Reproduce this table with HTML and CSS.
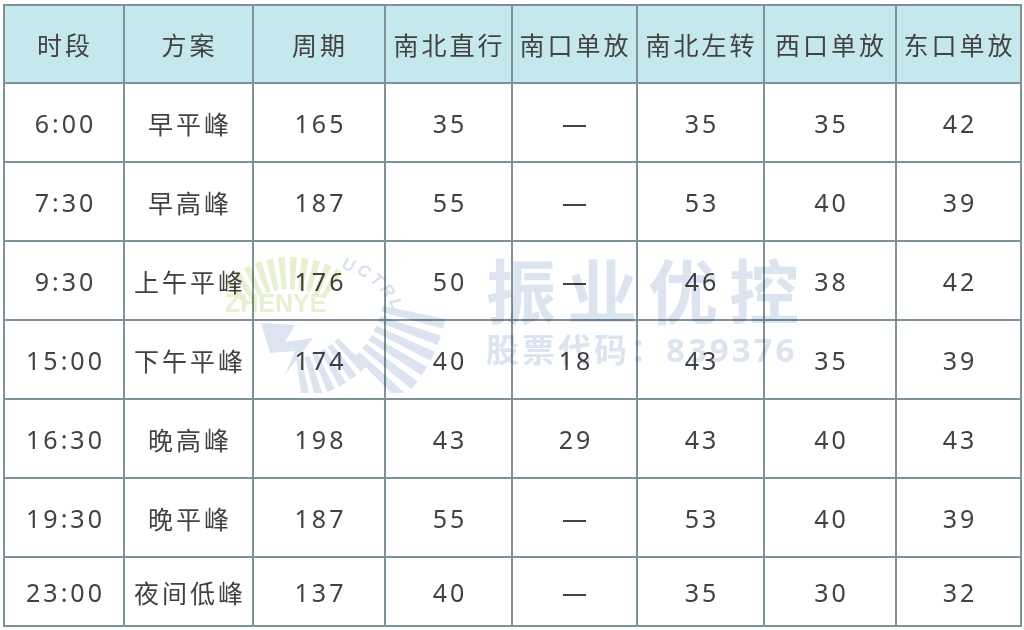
FILE: index.html
```html
<!DOCTYPE html>
<html lang="zh-CN">
<head>
<meta charset="utf-8">
<title>配时方案</title>
<link rel="stylesheet" href="styles.css">
</head>
<body>
<div class="page">
  <div class="table">
    <div class="cell head">时段</div>
    <div class="cell head">方案</div>
    <div class="cell head">周期</div>
    <div class="cell head">南北直行</div>
    <div class="cell head">南口单放</div>
    <div class="cell head">南北左转</div>
    <div class="cell head">西口单放</div>
    <div class="cell head">东口单放</div>

    <div class="cell">6:00</div><div class="cell">早平峰</div><div class="cell">165</div><div class="cell">35</div><div class="cell">—</div><div class="cell">35</div><div class="cell">35</div><div class="cell">42</div>
    <div class="cell">7:30</div><div class="cell">早高峰</div><div class="cell">187</div><div class="cell">55</div><div class="cell">—</div><div class="cell">53</div><div class="cell">40</div><div class="cell">39</div>
    <div class="cell">9:30</div><div class="cell">上午平峰</div><div class="cell">176</div><div class="cell">50</div><div class="cell">—</div><div class="cell">46</div><div class="cell">38</div><div class="cell">42</div>
    <div class="cell">15:00</div><div class="cell">下午平峰</div><div class="cell">174</div><div class="cell">40</div><div class="cell">18</div><div class="cell">43</div><div class="cell">35</div><div class="cell">39</div>
    <div class="cell">16:30</div><div class="cell">晚高峰</div><div class="cell">198</div><div class="cell">43</div><div class="cell">29</div><div class="cell">43</div><div class="cell">40</div><div class="cell">43</div>
    <div class="cell">19:30</div><div class="cell">晚平峰</div><div class="cell">187</div><div class="cell">55</div><div class="cell">—</div><div class="cell">53</div><div class="cell">40</div><div class="cell">39</div>
    <div class="cell">23:00</div><div class="cell">夜间低峰</div><div class="cell">137</div><div class="cell">40</div><div class="cell">—</div><div class="cell">35</div><div class="cell">30</div><div class="cell">32</div>
  </div>

  <svg class="wm-logo" width="240" height="148" viewBox="0 0 240 148" aria-hidden="true">
    <circle cx="75" cy="110" r="82" fill="none" stroke="#e7f0cf" stroke-width="32" pathLength="360"
      stroke-dasharray="4 3 4 3 4 3 4 3 4 3 4 3 4 3 4 3 4 3 4 3 4 400" transform="rotate(228 75 110)"/>
    <circle cx="70" cy="40" r="132" fill="none" stroke="#dbe4ef" stroke-width="64" pathLength="360"
      stroke-dasharray="3.5 2.5 3.5 2.5 3.5 2.5 3.5 2.5 3.5 2.5 3.5 400" transform="rotate(12 70 40)"/>
    <circle cx="70" cy="40" r="95" fill="none" stroke="#dbe4ef" stroke-width="40" pathLength="360"
      stroke-dasharray="4 2.5 4 2.5 4 2.5 4 2.5 4 2.5 4 400" transform="rotate(45 70 40)"/>
    <polygon points="46,78 80,80 70,97 98,93 70,130 80,106 55,108" fill="#dbe4ef"/>
    <text x="10" y="67" class="wm-zhenye">ZHENYE</text>
    <path id="arcpath" d="M 126 24 A 72 72 0 0 1 184 86" fill="none"/>
    <text class="wm-uctrl"><textPath href="#arcpath">UCTRL</textPath></text>
  </svg>

  <div class="wm-text" aria-hidden="true">
    <div class="wm-big">振业优控</div>
    <div class="wm-small">股票代码：839376</div>
  </div>
</div>
</body>
</html>
```

FILE: styles.css
```css
html, body {
  margin: 0;
  padding: 0;
  background: #ffffff;
}

.page {
  position: relative;
  width: 1024px;
  height: 630px;
  overflow: hidden;
}

.table {
  display: grid;
  grid-template-columns: 118px 127px 130px 125px 123px 125px 130px 123px;
  grid-template-rows: 76px repeat(6, 77px) 67px;
  gap: 2px;
  padding: 2px;
  background: #7f9299;
  width: max-content;
  margin: 4px 0 0 3px;
}

.cell {
  background: #ffffff;
  display: flex;
  align-items: center;
  justify-content: center;
  padding-left: 3px;
  font-family: "Noto Sans", "Noto Sans CJK SC", sans-serif;
  font-size: 25px;
  letter-spacing: 3px;
  color: #424242;
  white-space: nowrap;
}

.cell.head {
  background: #c5e8ec;
  padding-left: 2px;
}

.wm-logo {
  position: absolute;
  left: 215px;
  top: 245px;
  mix-blend-mode: multiply;
  pointer-events: none;
}

.wm-zhenye {
  font-family: "Liberation Sans", sans-serif;
  font-weight: 700;
  font-size: 25px;
  fill: #e7f0cf;
}

.wm-uctrl {
  font-family: "Liberation Sans", sans-serif;
  font-weight: 700;
  font-style: italic;
  font-size: 17px;
  letter-spacing: 3px;
  fill: #d8e2ee;
}

.wm-text {
  position: absolute;
  left: 486px;
  top: 257px;
  display: flex;
  flex-direction: column;
  gap: 6px;
  color: #dce4ef;
  font-family: "Noto Sans", "Noto Sans CJK SC", sans-serif;
  font-weight: 700;
  mix-blend-mode: multiply;
  pointer-events: none;
  white-space: nowrap;
}

.wm-big {
  font-size: 70px;
  line-height: 70px;
  letter-spacing: 11px;
}

.wm-small {
  font-size: 33px;
  line-height: 33px;
  letter-spacing: 3px;
}
```
